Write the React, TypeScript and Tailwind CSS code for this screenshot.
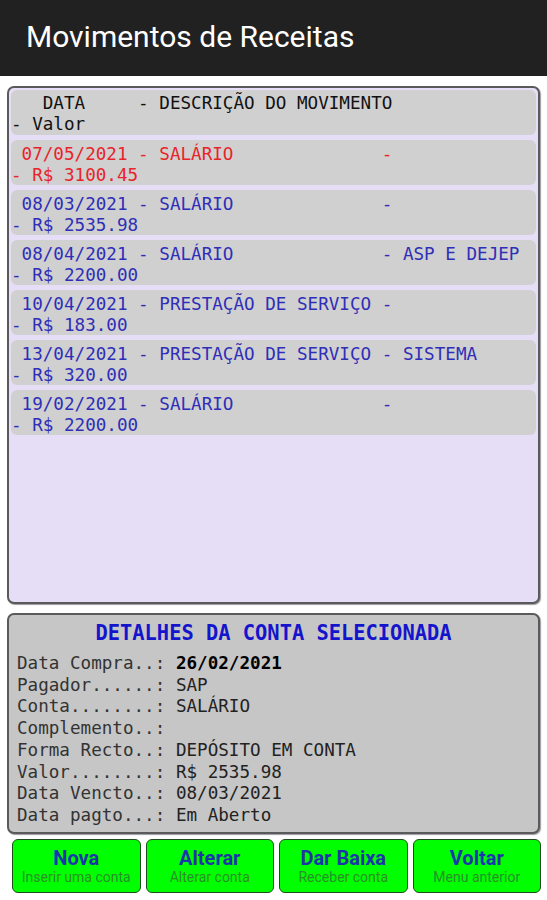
const mono = { fontFamily: '"DejaVu Sans Mono", "Liberation Mono", monospace' };

interface Movimento {
  data: string;
  descricao: string;
  complemento: string;
  valor: string;
  vencido?: boolean;
}

const movimentos: Movimento[] = [
  { data: '07/05/2021', descricao: 'SALÁRIO', complemento: '', valor: '3100.45', vencido: true },
  { data: '08/03/2021', descricao: 'SALÁRIO', complemento: '', valor: '2535.98' },
  { data: '08/04/2021', descricao: 'SALÁRIO', complemento: 'ASP E DEJEP', valor: '2200.00' },
  { data: '10/04/2021', descricao: 'PRESTAÇÃO DE SERVIÇO', complemento: '', valor: '183.00' },
  { data: '13/04/2021', descricao: 'PRESTAÇÃO DE SERVIÇO', complemento: 'SISTEMA', valor: '320.00' },
  { data: '19/02/2021', descricao: 'SALÁRIO', complemento: '', valor: '2200.00' },
];

const detalhes: [string, string, boolean?][] = [
  ['Data Compra..: ', '26/02/2021', true],
  ['Pagador......: ', 'SAP'],
  ['Conta........: ', 'SALÁRIO'],
  ['Complemento..: ', ''],
  ['Forma Recto..: ', 'DEPÓSITO EM CONTA'],
  ['Valor........: ', 'R$ 2535.98'],
  ['Data Vencto..: ', '08/03/2021'],
  ['Data pagto...: ', 'Em Aberto'],
];

const botoes = [
  { titulo: 'Nova', sub: 'Inserir uma conta' },
  { titulo: 'Alterar', sub: 'Alterar conta' },
  { titulo: 'Dar Baixa', sub: 'Receber conta' },
  { titulo: 'Voltar', sub: 'Menu anterior' },
];

export default function App() {
  return (
    <div className="w-[547px] h-[900px] bg-white flex flex-col overflow-hidden">
      <header className="h-[76px] bg-[#212121] flex items-center px-[26px] shrink-0">
        <h1 className="text-white text-[30px] leading-none pb-[3px]" style={{ fontFamily: 'Roboto, sans-serif' }}>
          Movimentos de Receitas
        </h1>
      </header>

      {/* lista de movimentos */}
      <div
        className="mt-[10px] mx-[7px] h-[518px] bg-[#e5def6] border-2 border-[#5a5a5a] rounded-[7px] shadow-[1px_1px_1px_#9a9aa0] px-[2px] pt-[2px] flex flex-col gap-[5px] text-[17.6px] leading-[20.5px]"
        style={mono}
      >
        <div className="bg-[#d0d0d0] rounded-[6px] h-[45px] pt-[3px] text-[#111] whitespace-pre">
          <div>{'   DATA     - DESCRIÇÃO DO MOVIMENTO'}</div>
          <div>{'- Valor'}</div>
        </div>
        {movimentos.map((m) => (
          <div
            key={m.data + m.valor}
            className={`bg-[#d0d0d0] rounded-[6px] h-[45px] pt-[4px] whitespace-pre ${m.vencido ? 'text-[#e8242a]' : 'text-[#2e2eb8]'}`}
          >
            <div>{` ${m.data} - ${m.descricao.padEnd(20, ' ')} - ${m.complemento}`}</div>
            <div>{`- R$ ${m.valor}`}</div>
          </div>
        ))}
      </div>

      {/* detalhes */}
      <div
        className="mt-[9px] mx-[7px] h-[221px] bg-[#c6c6c6] border-2 border-[#5a5a5a] rounded-[7px] shadow-[1px_1px_1px_#9a9aa0] px-[8px] pt-[5px]"
        style={mono}
      >
        <div className="text-center text-[#1414cc] text-[20.4px] leading-[26px] font-semibold">DETALHES DA CONTA SELECIONADA</div>
        <div className="text-[17.6px] leading-[21.7px] mt-[7px] whitespace-pre">
          {detalhes.map(([label, valor, destaque]) => (
            <div key={label}>
              <span className="text-[#333]">{label}</span>
              <span className={destaque ? 'text-black font-semibold' : 'text-[#222]'}>{valor}</span>
            </div>
          ))}
        </div>
      </div>

      {/* botões */}
      <div className="mt-[5px] ml-[12px] mr-[6px] grid grid-cols-4 gap-[5px]" style={{ fontFamily: 'Roboto, sans-serif' }}>
        {botoes.map((b) => (
          <button
            key={b.titulo}
            className="h-[54px] bg-[#00ff00] border-[1.5px] border-[#1d4d1d] rounded-[6px] flex flex-col items-center justify-center"
          >
            <span className="text-[#1a36aa] font-bold text-[20px] leading-[22px]">{b.titulo}</span>
            <span className="text-[#2a8f2a] text-[14px] leading-[17px]">{b.sub}</span>
          </button>
        ))}
      </div>
    </div>
  );
}
